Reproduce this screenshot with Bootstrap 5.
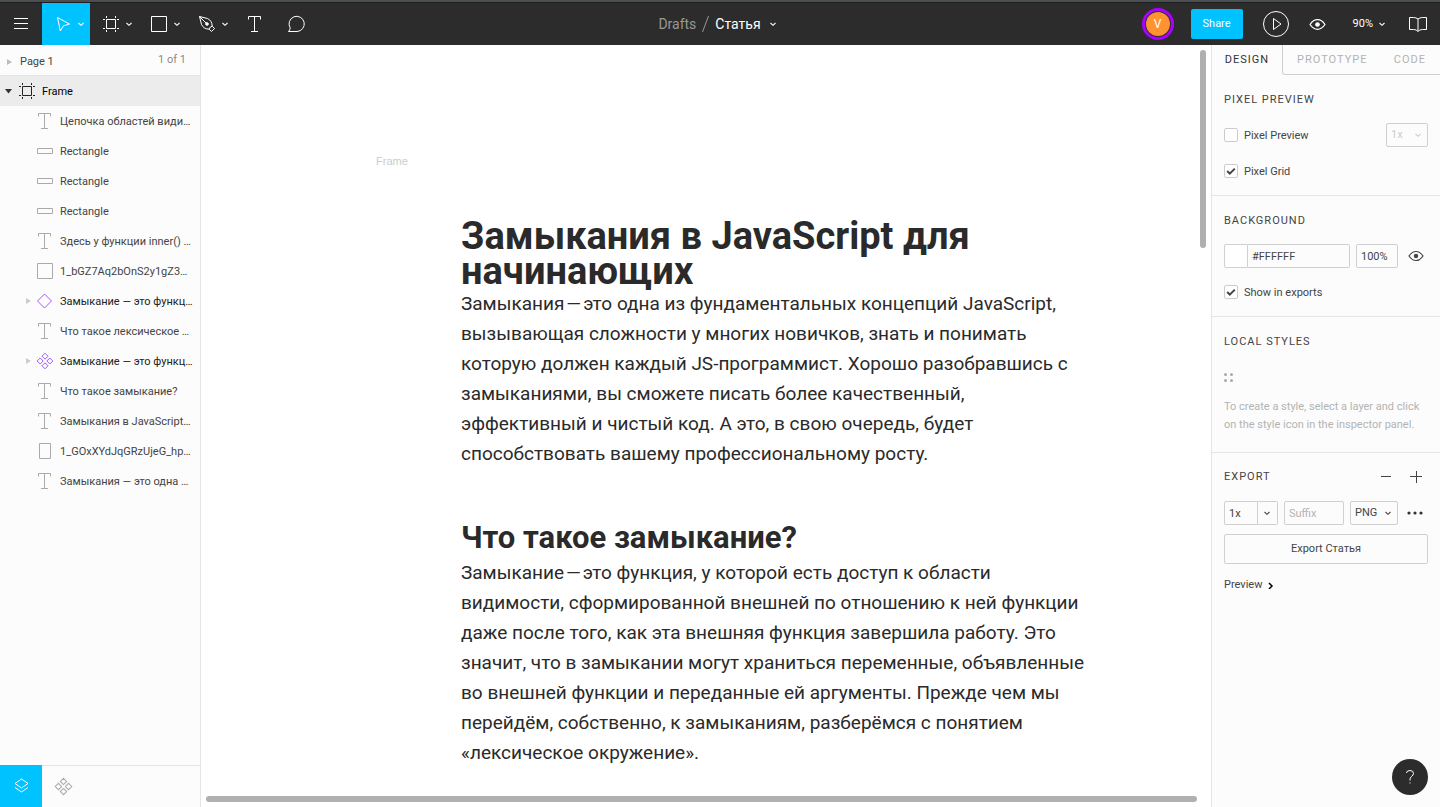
<!DOCTYPE html>
<html lang="ru">
<head>
<meta charset="utf-8">
<meta name="viewport" content="width=device-width, initial-scale=1">
<title>Статья</title>
<link href="https://cdn.jsdelivr.net/npm/bootstrap@5.3.0/dist/css/bootstrap.min.css" rel="stylesheet">
<style>
  :root { --line:#e5e5e5; --accent:#00c2ff; --ink:#444; --panel:#fcfcfc; }
  body { font:400 11px/18px Roboto,"Open Sans",sans-serif; color:var(--ink); background:#fff; }
  button { font:inherit; color:inherit; background:none; border:0; padding:0; }
  svg { display:block; flex:none; fill:none; stroke:currentColor; }
  a { color:inherit; text-decoration:none; }

  /* top toolbar */
  .topbar { display:grid; grid-template-columns:1fr auto 1fr; height:45px; background:#2c2c2c; color:#fff; border-top:2px solid #4a5052; box-shadow:inset 0 1px #1e1e1e; padding-top:1px; }
  .tool { display:flex; align-items:center; height:42px; padding:0 5px 0 12px; gap:5px; }
  .tool-solo { padding-right:12px; }
  .tool.active { background:var(--accent); }
  .doc-title { font-size:14px; padding-right:5px; }
  .crumb { color:#989898; }
  .avatar { width:32px; height:32px; border:3px solid #a0f; padding:1px; }
  .avatar span { width:24px; height:24px; background:#ff9231; font-size:12px; }
  .share { width:52px; height:30px; background:var(--accent); border-radius:2px; margin-left:17px; }
  .utilities { padding-right:13px; }
  .util { margin-left:20px; }
  .util-zoom { margin:0 23px 0 27px; gap:5px; }

  /* layers panel */
  .side-left { width:201px; background:var(--panel); border-right:1px solid var(--line); }
  .page-row { height:31px; border-bottom:1px solid var(--line); padding:0 14px 0 7px; }
  .layer { display:flex; align-items:center; height:30px; width:100%; padding:2px 0 0 26px; gap:6px; white-space:nowrap; text-align:left; }
  .layer svg { margin-top:-2px; }
  .layer .layer-icon { color:#aaa; margin-left:4px; }
  .layer .arrow-slot { width:5px; flex:none; color:#ccc; margin-right:-5px; }
  .layer.component .layer-icon { color:#a259ff; }
  .layer.component { color:#222; }
  .layer.frame-row { background:#ececec; color:#000; padding-left:5px; }
  .layer.frame-row .layer-icon { color:#222; margin-left:0; }
  .side-foot { height:42px; border-top:1px solid var(--line); }
  .side-foot button { width:42px; height:42px; margin-top:-1px; color:#aaa; }
  .side-foot button.active { background:var(--accent); color:#fff; }

  /* canvas */
  .canvas { background:#fff; padding:107px 0 0 175px; }
  .frame-label { font-family:"Liberation Sans",sans-serif; color:#ccc; }
  .article { padding:49px 0 0 85px; color:#2a2a2a; white-space:nowrap; }
  .article h1 { font-size:38px; line-height:35px; font-weight:700; margin:0; }
  .article h2 { font-size:31px; line-height:36px; font-weight:700; margin:51px 0 2px; }
  .article p { font-size:19px; line-height:30px; margin:0; }
  .bar-v { top:5px; right:5px; width:6px; height:198px; background:#b0b0b0; }
  .bar-h { bottom:5px; left:5px; right:14px; height:6px; background:#b0b0b0; }

  /* inspector */
  .side-right { width:229px; background:var(--panel); border-left:1px solid var(--line); }
  .tabs { height:30px; }
  .tabs button, .caption-row { letter-spacing:1px; }
  .tabs .current { width:70px; color:#333; }
  .tabs .others { border:1px solid #d0d0d0; border-width:0 0 1px 1px; border-radius:0 0 0 3px; color:#b3b3b3; padding:0 14px; }
  .pane { padding:6px 12px; border-bottom:1px solid var(--line); }
  .pane:last-child { border:0; }
  .prow { display:flex; align-items:center; height:36px; }
  .prow label, .caption-text { padding-top:2px; }
  .hint { color:#b3b3b3; padding:3px 0 12px; }
  .tick { appearance:none; width:14px; height:14px; margin:0 6px 0 0; border:1px solid #ccc; border-radius:2px; background:#fff center/12px no-repeat; }
  .tick:checked { background-image:url("data:image/svg+xml,%3Csvg xmlns='http://www.w3.org/2000/svg' viewBox='0 0 12 12'%3E%3Cpath d='M2.2 6l2.6 2.6 5-5' fill='none' stroke='%23444' stroke-width='2'/%3E%3C/svg%3E"); }
  .box { height:24px; border:1px solid #d0d0d0; border-radius:2px; background-color:var(--panel); color:var(--ink); padding:0 0 0 4px; font:inherit; outline:0; min-width:0; appearance:none; }
  .box::placeholder { color:#b3b3b3; opacity:1; }
  select.box { background:var(--panel) url("data:image/svg+xml,%3Csvg xmlns='http://www.w3.org/2000/svg' viewBox='0 0 8 8'%3E%3Cpath d='M1.5 3L4 5.3 6.5 3' fill='none' stroke='%23444' stroke-width='1.1'/%3E%3C/svg%3E") right 5px center/8px no-repeat; opacity:1; }
  select.box:disabled { color:#ccc; background-image:url("data:image/svg+xml,%3Csvg xmlns='http://www.w3.org/2000/svg' viewBox='0 0 8 8'%3E%3Cpath d='M1.5 3L4 5.3 6.5 3' fill='none' stroke='%23ccc' stroke-width='1.1'/%3E%3C/svg%3E"); }
  .swatch { width:24px; height:24px; border:1px solid #d0d0d0; border-radius:2px 0 0 2px; background:#fff; }
  .joined-left { border-radius:2px 0 0 2px; }
  .joined-right { border-radius:0 2px 2px 0; border-left:0; }
  .gap-before { margin-left:6px; }
  .w-hex { width:102px; } .w-pct { width:42px; } .w-scale { width:34px; } .w-drop { width:20px; padding:0 5px; }
  .w-suffix { width:60px; } .w-format { width:48px; }
  .export-btn { width:100%; height:30px; border:1px solid #d0d0d0; border-radius:2px; margin-top:3px; }
  .preview-btn { margin-top:3px; gap:6px; }
  .export-tools { gap:18px; padding-right:6px; }
  .help { right:12px; bottom:12px; width:36px; height:36px; background:#2c2c2c; color:#fff; }
</style>
</head>
<body class="vh-100 d-flex flex-column overflow-hidden">

<svg width="0" height="0" class="position-absolute" aria-hidden="true">
  <symbol id="chev" viewBox="0 0 8 8"><path d="M1.5 3L4 5.3 6.5 3" stroke-width="1.1"/></symbol>
  <symbol id="frame" viewBox="0 0 18 18"><path d="M4.5 4.5h9v9h-9zM1 4.5h2M15 4.5h2M1 13.5h2M15 13.5h2M4.5 1v2M13.5 1v2M4.5 15v2M13.5 15v2"/></symbol>
  <symbol id="text" viewBox="0 0 18 18"><path d="M2.5 4.5v-3h12v3M8.5 1.5v15M5 16.5h7"/></symbol>
  <symbol id="bar" viewBox="0 0 18 18"><path d="M1.5 6.5h15v5h-15z"/></symbol>
  <symbol id="square" viewBox="0 0 18 18"><path d="M1.5 1.5h15v15h-15z"/></symbol>
  <symbol id="portrait" viewBox="0 0 18 18"><path d="M3.5 1.5h11v15h-11z"/></symbol>
  <symbol id="diamond" viewBox="0 0 18 18"><path d="M8.5 2l7 7-7 7-7-7z"/></symbol>
  <symbol id="component" viewBox="0 0 18 18"><path d="M9 1.200l3 3-3 3-3-3zM9 10.800l3 3-3 3-3-3zM4.200 6l3 3-3 3-3-3zM13.800 6l3 3-3 3-3-3z"/></symbol>
  <symbol id="tri" viewBox="0 0 5 6"><path d="M0 0l5 3-5 3z" fill="currentColor" stroke="none"/></symbol>
  <symbol id="eye" viewBox="0 0 16 12"><path d="M1 6Q4 1.500 8 1.500T15 6Q12 10.500 8 10.500T1 6z" stroke-width="1.2"/><circle cx="8" cy="6" r="2.200" fill="currentColor" stroke="none"/></symbol>
</svg>

<header class="topbar flex-shrink-0">
  <nav class="d-flex" aria-label="Tools">
    <button class="tool tool-solo" aria-label="Menu"><svg width="18" height="18"><path d="M2 3.500h14M2 8.500h14M2 13.500h14"/></svg></button>
    <button class="tool active" aria-label="Move"><svg width="18" height="18"><path d="M3.500 2.500l12 6.500-6 1.800-3.200 5.200z" stroke-linejoin="round"/></svg><svg width="8" height="8"><use href="#chev"/></svg></button>
    <button class="tool" aria-label="Frame"><svg width="18" height="18"><use href="#frame"/></svg><svg width="8" height="8"><use href="#chev"/></svg></button>
    <button class="tool" aria-label="Rectangle"><svg width="18" height="18"><use href="#square"/></svg><svg width="8" height="8"><use href="#chev"/></svg></button>
    <button class="tool" aria-label="Pen"><svg width="18" height="18"><path d="M1.500 1.500L9.500 3.500Q14 5.500 14.200 11.200L16.500 13.500 13.500 16.500 11.200 14.200Q5.500 14 3.500 9.500zM1.500 1.500l7 7M14.200 11.200Q12 11.500 11.200 14.200" stroke-linejoin="round"/><circle cx="9" cy="9" r="1.300" fill="currentColor"/></svg><svg width="8" height="8"><use href="#chev"/></svg></button>
    <button class="tool tool-solo" aria-label="Text"><svg width="18" height="18"><use href="#text"/></svg></button>
    <button class="tool tool-solo" aria-label="Comment"><svg width="18" height="18"><path d="M.5 16.500H9A7.600 7.600 0 1 0 2.200 12.900Q2 15 .5 16.500z" stroke-linejoin="round"/></svg></button>
  </nav>
  <div class="doc-title d-flex align-items-center">
    <a href="#" class="crumb">Drafts</a>
    <svg class="crumb mx-1" width="11" height="18"><path d="M8.500 1l-6 16"/></svg>
    <button class="d-flex align-items-center gap-2">Статья <svg width="8" height="8"><use href="#chev"/></svg></button>
  </div>
  <div class="utilities d-flex align-items-center justify-content-end">
    <button class="avatar rounded-circle" aria-label="Profile"><span class="rounded-circle d-flex align-items-center justify-content-center">V</span></button>
    <button class="share">Share</button>
    <button class="util" aria-label="Present"><svg width="26" height="26"><circle cx="13" cy="13" r="12.500"/><path d="M10.500 7.500l7.500 5.500-7.500 5.500z" stroke-linejoin="round"/></svg></button>
    <button class="util" aria-label="View"><svg width="17" height="13"><use href="#eye"/></svg></button>
    <button class="util-zoom d-flex align-items-center">90% <svg width="8" height="8"><use href="#chev"/></svg></button>
    <button aria-label="Library"><svg width="18" height="18"><path d="M9 4Q7 2.500 4.500 2.500H.5v12h4Q7.500 14.500 9 16.500 10.500 14.500 13.500 14.500h4v-12h-4Q11 2.500 9 4v12" stroke-linejoin="round"/></svg></button>
  </div>
</header>

<div class="d-flex flex-grow-1 overflow-hidden">
  <aside class="side-left flex-shrink-0 d-flex flex-column">
    <div class="page-row d-flex align-items-center">
      <button class="d-flex align-items-center pt-1"><svg class="me-2 text-black-50 opacity-50" width="5" height="6"><use href="#tri"/></svg>Page 1</button>
      <span class="ms-auto text-black-50">1 of 1</span>
    </div>
    <button class="layer frame-row"><svg width="7" height="5"><path d="M0 0h7L3.500 4.500z" fill="#333" stroke="none"/></svg><svg class="layer-icon" width="18" height="18"><use href="#frame"/></svg>Frame</button>
    <button class="layer"><span class="arrow-slot"></span><svg class="layer-icon" width="18" height="18"><use href="#text"/></svg>Цепочка областей види…</button>
    <button class="layer"><span class="arrow-slot"></span><svg class="layer-icon" width="18" height="18"><use href="#bar"/></svg>Rectangle</button>
    <button class="layer"><span class="arrow-slot"></span><svg class="layer-icon" width="18" height="18"><use href="#bar"/></svg>Rectangle</button>
    <button class="layer"><span class="arrow-slot"></span><svg class="layer-icon" width="18" height="18"><use href="#bar"/></svg>Rectangle</button>
    <button class="layer"><span class="arrow-slot"></span><svg class="layer-icon" width="18" height="18"><use href="#text"/></svg>Здесь у функции inner() …</button>
    <button class="layer"><span class="arrow-slot"></span><svg class="layer-icon" width="18" height="18"><use href="#square"/></svg>1_bGZ7Aq2bOnS2y1gZ3…</button>
    <button class="layer component"><svg class="arrow-slot" width="5" height="6"><use href="#tri"/></svg><svg class="layer-icon" width="18" height="18"><use href="#diamond"/></svg>Замыкание — это функц…</button>
    <button class="layer"><span class="arrow-slot"></span><svg class="layer-icon" width="18" height="18"><use href="#text"/></svg>Что такое лексическое …</button>
    <button class="layer component"><svg class="arrow-slot" width="5" height="6"><use href="#tri"/></svg><svg class="layer-icon" width="18" height="18"><use href="#component"/></svg>Замыкание — это функц…</button>
    <button class="layer"><span class="arrow-slot"></span><svg class="layer-icon" width="18" height="18"><use href="#text"/></svg>Что такое замыкание?</button>
    <button class="layer"><span class="arrow-slot"></span><svg class="layer-icon" width="18" height="18"><use href="#text"/></svg>Замыкания в JavaScript…</button>
    <button class="layer"><span class="arrow-slot"></span><svg class="layer-icon" width="18" height="18"><use href="#portrait"/></svg>1_GOxXYdJqGRzUjeG_hp…</button>
    <button class="layer"><span class="arrow-slot"></span><svg class="layer-icon" width="18" height="18"><use href="#text"/></svg>Замыкания — это одна …</button>
    <div class="side-foot d-flex mt-auto">
      <button class="active d-flex align-items-center justify-content-center" aria-label="Layers"><svg width="18" height="18"><path d="M9.500 2l6.500 4.500-6.500 4.500L3 6.500zM3 10.500L9.500 15l6.500-4.500"/></svg></button>
      <button class="d-flex align-items-center justify-content-center" aria-label="Components"><svg width="19" height="19"><use href="#component"/></svg></button>
    </div>
  </aside>

  <main class="canvas flex-grow-1 position-relative overflow-hidden">
    <div class="frame-label">Frame</div>
    <article class="article">
      <h1>Замыкания в JavaScript для<br>начинающих</h1>
      <p>Замыкания&#8202;—&#8202;это одна из фундаментальных концепций JavaScript,<br>вызывающая сложности у многих новичков, знать и понимать<br>которую должен каждый JS-программист. Хорошо разобравшись с<br>замыканиями, вы сможете писать более качественный,<br>эффективный и чистый код. А это, в свою очередь, будет<br>способствовать вашему профессиональному росту.</p>
      <h2>Что такое замыкание?</h2>
      <p>Замыкание&#8202;—&#8202;это функция, у которой есть доступ к области<br>видимости, сформированной внешней по отношению к ней функции<br>даже после того, как эта внешняя функция завершила работу. Это<br>значит, что в замыкании могут храниться переменные, объявленные<br>во внешней функции и переданные ей аргументы. Прежде чем мы<br>перейдём, собственно, к замыканиям, разберёмся с понятием<br>«лексическое окружение».</p>
    </article>
    <div class="bar-v position-absolute rounded-pill"></div>
    <div class="bar-h position-absolute rounded-pill"></div>
  </main>

  <aside class="side-right flex-shrink-0">
    <div class="tabs d-flex">
      <button class="current">DESIGN</button>
      <div class="others flex-grow-1 d-flex justify-content-between"><button>PROTOTYPE</button><button>CODE</button></div>
    </div>
    <section class="pane">
      <div class="prow caption-row"><span class="caption-text">PIXEL PREVIEW</span></div>
      <div class="prow"><input class="tick" type="checkbox" id="pp"><label for="pp">Pixel Preview</label>
        <select class="box w-pct ms-auto" disabled aria-label="Pixel preview scale"><option>1x</option></select></div>
      <div class="prow"><input class="tick" type="checkbox" id="pg" checked><label for="pg">Pixel Grid</label></div>
    </section>
    <section class="pane">
      <div class="prow caption-row"><span class="caption-text">BACKGROUND</span></div>
      <div class="prow"><button class="swatch" aria-label="Background colour"></button><input class="box joined-right w-hex" value="#FFFFFF" aria-label="Hex"><input class="box w-pct gap-before" value="100%" aria-label="Opacity">
        <button class="ms-auto me-1" aria-label="Toggle background"><svg width="16" height="12"><use href="#eye"/></svg></button></div>
      <div class="prow"><input class="tick" type="checkbox" id="se" checked><label for="se">Show in exports</label></div>
    </section>
    <section class="pane">
      <div class="prow caption-row"><span class="caption-text">LOCAL STYLES</span></div>
      <div class="prow"><svg width="10" height="10"><g fill="#aaa" stroke="none"><circle cx="1.500" cy="2.500" r="1.500"/><circle cx="7.500" cy="2.500" r="1.500"/><circle cx="1.500" cy="8.500" r="1.500"/><circle cx="7.500" cy="8.500" r="1.500"/></g></svg></div>
      <div class="hint">To create a style, select a layer and click<br>on the style icon in the inspector panel.</div>
    </section>
    <section class="pane">
      <div class="prow caption-row">EXPORT
        <div class="export-tools d-flex ms-auto">
          <button aria-label="Remove export"><svg width="12" height="12"><path d="M1 5.500h10"/></svg></button>
          <button aria-label="Add export"><svg width="12" height="12"><path d="M0 5.500h12M6.500 0v12"/></svg></button>
        </div></div>
      <div class="prow"><input class="box joined-left w-scale" value="1x" aria-label="Scale"><button class="box joined-right w-drop" aria-label="Choose scale"><svg width="8" height="8"><use href="#chev"/></svg></button>
        <input class="box w-suffix gap-before" placeholder="Suffix" aria-label="Suffix"><select class="box w-format gap-before" aria-label="Format"><option>PNG</option></select>
        <button class="ms-auto me-1" aria-label="More"><svg width="17" height="4"><g fill="#333" stroke="none"><circle cx="2" cy="2" r="1.600"/><circle cx="8" cy="2" r="1.600"/><circle cx="14" cy="2" r="1.600"/></g></svg></button></div>
      <button class="export-btn">Export Статья</button>
      <button class="prow preview-btn">Preview <svg width="6" height="8"><path d="M1 2L4 5 1 8" stroke="#000" stroke-width="1.500"/></svg></button>
    </section>
  </aside>
</div>
<button class="help position-absolute rounded-circle d-flex align-items-center justify-content-center" aria-label="Help"><svg width="12" height="18"><path d="M2.500 5Q2.500 2.500 6 2.500T9.500 5.500Q9.500 7 7.500 8.500T6 12.500M6 14.500v1"/></svg></button>
<script src="https://cdn.jsdelivr.net/npm/bootstrap@5.3.0/dist/js/bootstrap.bundle.min.js"></script>
</body>
</html>
